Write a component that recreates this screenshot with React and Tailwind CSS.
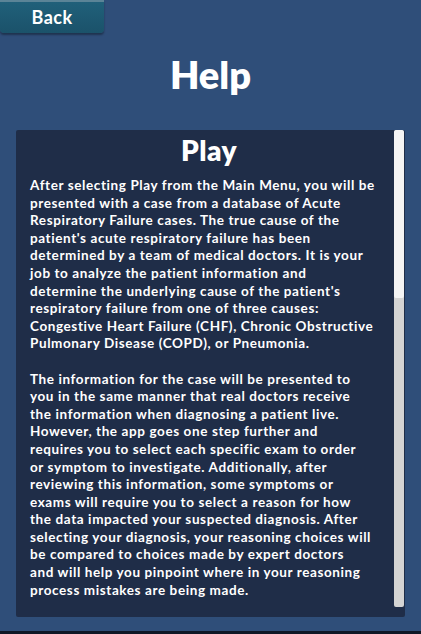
const PLAY_TEXT = [
  [
    "After selecting Play from the Main Menu, you will be",
    "presented with a case from a database of Acute",
    "Respiratory Failure cases. The true cause of the",
    "patient's acute respiratory failure has been",
    "determined by a team of medical doctors. It is your",
    "job to analyze the patient information and",
    "determine the underlying cause of the patient's",
    "respiratory failure from one of three causes:",
    "Congestive Heart Failure (CHF), Chronic Obstructive",
    "Pulmonary Disease (COPD), or Pneumonia.",
  ],
  [
    "The information for the case will be presented to",
    "you in the same manner that real doctors receive",
    "the information when diagnosing a patient live.",
    "However, the app goes one step further and",
    "requires you to select each specific exam to order",
    "or symptom to investigate. Additionally, after",
    "reviewing this information, some symptoms or",
    "exams will require you to select a reason for how",
    "the data impacted your suspected diagnosis. After",
    "selecting your diagnosis, your reasoning choices will",
    "be compared to choices made by expert doctors",
    "and will help you pinpoint where in your reasoning",
    "process mistakes are being made.",
  ],
];

const App = () => {
  return (
    <div
      className="flex h-[634px] w-full flex-col bg-[#2f4e79] text-white"
      style={{ fontFamily: "Lato, 'Open Sans', sans-serif" }}
    >
      <div className="flex h-[33px]">
        <button
          type="button"
          className="h-[33px] w-[104px] rounded-b-[4px] border-t-2 border-[#5b8497] bg-gradient-to-b from-[#20607a] to-[#1b526a] text-[18px] font-bold tracking-[0.5px] shadow-[0_2px_2px_rgba(0,0,0,0.35)]"
        >
          Back
        </button>
      </div>

      <h1 className="mt-[19px] text-center text-[38px] font-extrabold leading-[44px]">
        Help
      </h1>

      <section className="mx-[16px] mt-[34px] flex h-[487px] rounded-[2px] bg-[#1f2d48]">
        <div className="flex-1 pl-[14px] pr-[6px]">
          <h2 className="mt-[4px] text-center text-[28px] font-extrabold leading-[32px] tracking-[0.5px]">
            Play
          </h2>
          <div className="mt-[11px] space-y-[17.6px] text-[13.5px] font-bold leading-[17.6px] tracking-[0.6px]">
            {PLAY_TEXT.map((para, i) => (
              <div key={i}>
                {para.map((line) => (
                  <p key={line} className="whitespace-nowrap">
                    {line}
                  </p>
                ))}
              </div>
            ))}
          </div>
        </div>
        <div className="mr-[1px] flex h-[477px] w-[10px] flex-col overflow-hidden rounded-[2px] bg-[#d4d4d4]">
          <div className="h-[168px] rounded-[2px] bg-[#f4f4f4]" />
        </div>
      </section>

      <div className="flex-1" />
      <div className="h-[3px] bg-[#0f1726]" />
    </div>
  );
};

export default App;
